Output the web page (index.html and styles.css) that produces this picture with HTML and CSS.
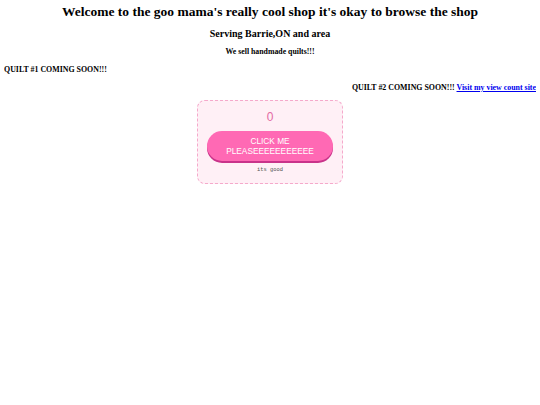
FILE: index.html
```html
<!DOCTYPE html>
<html>
<head>
<meta charset="utf-8">
<link rel="stylesheet" href="styles.css">
</head>
<body>
<h1 class="title">Welcome to the goo mama's really cool shop it's okay to browse the shop</h1>
<h2 class="sub">Serving Barrie,ON and area</h2>
<h3 class="tag">We sell handmade quilts!!!</h3>
<p class="quilt">QUILT #1 COMING SOON!!!</p>
<p class="quilt right">QUILT #2 COMING SOON!!! <a href="#" class="link">Visit my view count site</a></p>
<div class="card">
  <div class="count">0</div>
  <button class="btn">CLICK ME PLEASEEEEEEEEEEE</button>
  <div class="note">its good</div>
</div>
</body>
</html>
```
FILE: styles.css
```css
body {
  margin: 3px 4px 4px;
  font-family: "Liberation Serif", "Times New Roman", serif;
  color: #000;
  background: #fff;
}
.title {
  font-size: 13.5px;
  line-height: 18px;
  margin: 0;
  text-align: center;
  font-weight: bold;
}
.sub {
  font-size: 10px;
  line-height: 14px;
  margin: 6px 0 0;
  text-align: center;
}
.tag {
  font-size: 7.8px;
  line-height: 10px;
  margin: 6px 0 0;
  text-align: center;
}
.quilt {
  font-size: 7.9px;
  line-height: 10px;
  font-weight: bold;
  margin: 8px 0 0;
}
.right {
  text-align: right;
}
.link {
  color: #0000ee;
  text-decoration: underline;
}
.card {
  width: 126px;
  margin: 7px auto 0;
  padding: 9px 9px 10px;
  border: 1px dashed #f5a9cb;
  border-radius: 8px;
  background: #fff0f6;
  display: flex;
  flex-direction: column;
  align-items: center;
  font-family: "Liberation Sans", Arial, sans-serif;
}
.count {
  font-size: 12px;
  line-height: 14px;
  color: #e36aa3;
  margin-bottom: 7px;
}
.btn {
  width: 126px;
  height: 30px;
  border: none;
  border-radius: 15px;
  background: #ff69b4;
  box-shadow: 0 2px 0 #c9338a;
  color: #fff;
  font-family: "Liberation Sans", Arial, sans-serif;
  font-size: 8.3px;
  line-height: 10px;
  padding: 4px 10px;
  margin: 0;
}
.note {
  margin-top: 6px;
  font-family: "Liberation Mono", "Courier New", monospace;
  font-size: 5.4px;
  line-height: 6px;
  color: #555;
}
```
